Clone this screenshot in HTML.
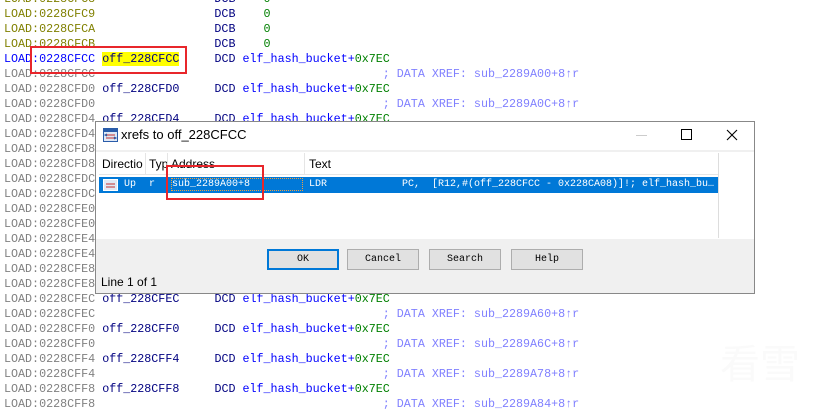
<!DOCTYPE html>
<html><head><meta charset="utf-8"><style>
*{margin:0;padding:0;box-sizing:border-box}
body{width:832px;height:411px;overflow:hidden;background:#fff;position:relative;font-family:"Liberation Mono",monospace;font-size:11.7px}
.l{position:absolute;left:4px;height:15px;line-height:15px;white-space:pre}
.g{color:#808080}.o{color:#808000}.b{color:#0000ff}.n{color:#000080}.gr{color:#008000}.c{color:#8080ff}
.hl{background:#ffff00}
.red{position:absolute;border:2px solid #e8262b}
.dlg{position:absolute;left:95px;top:121px;width:660px;height:173px;background:#f0f0f0;border:1px solid #888;font-family:"Liberation Sans",sans-serif}
.tb{height:28px;background:#fff;position:relative;font-size:13px}
.wh{position:absolute;left:0;top:30px;width:658px;height:87px;background:#fff}
.list{position:absolute;left:3px;top:31px;width:620px;height:85px;background:#fff;border-right:1px solid #ddd}
.hdr{height:22px;border-bottom:1px solid #e5e5e5;font-size:12px;position:relative}
.hdr span{position:absolute;top:4px}
.sep{position:absolute;top:0;width:1px;height:22px;background:#e5e5e5}
.row{position:absolute;top:24px;left:0;width:619px;height:16px;background:#0078d7;color:#fff;font-family:"Liberation Mono",monospace;font-size:10px}
.row span{position:absolute;top:2px;white-space:pre}
.btn{position:absolute;top:127px;height:21px;width:72px;border:1px solid #adadad;background:#e1e1e1;font-family:"Liberation Mono",monospace;font-size:10px;text-align:center;line-height:19px}
</style></head><body>
<div class="l" style="top:-8px"><span class="o">LOAD:0228CFC8</span>                 <span class="n">DCB    </span><span class="gr">0</span></div>
<div class="l" style="top:7px"><span class="o">LOAD:0228CFC9</span>                 <span class="n">DCB    </span><span class="gr">0</span></div>
<div class="l" style="top:22px"><span class="o">LOAD:0228CFCA</span>                 <span class="n">DCB    </span><span class="gr">0</span></div>
<div class="l" style="top:37px"><span class="o">LOAD:0228CFCB</span>                 <span class="n">DCB    </span><span class="gr">0</span></div>
<div class="l" style="top:52px"><span class="b">LOAD:0228CFCC</span> <span class="n hl">off_228CFCC</span>     <span class="n">DCD </span><span class="b">elf_hash_bucket+</span><span class="gr">0x7EC</span></div>
<div class="l" style="top:67px"><span class="g">LOAD:0228CFCC</span>                                         <span class="c">; DATA XREF: sub_2289A00+8↑r</span></div>
<div class="l" style="top:82px"><span class="g">LOAD:0228CFD0</span> <span class="n">off_228CFD0</span>     <span class="n">DCD </span><span class="b">elf_hash_bucket+</span><span class="gr">0x7EC</span></div>
<div class="l" style="top:97px"><span class="g">LOAD:0228CFD0</span>                                         <span class="c">; DATA XREF: sub_2289A0C+8↑r</span></div>
<div class="l" style="top:112px"><span class="g">LOAD:0228CFD4</span> <span class="n">off_228CFD4</span>     <span class="n">DCD </span><span class="b">elf_hash_bucket+</span><span class="gr">0x7EC</span></div>
<div class="l g" style="top:127px">LOAD:0228CFD4</div>
<div class="l g" style="top:142px">LOAD:0228CFD8</div>
<div class="l g" style="top:157px">LOAD:0228CFD8</div>
<div class="l g" style="top:172px">LOAD:0228CFDC</div>
<div class="l g" style="top:187px">LOAD:0228CFDC</div>
<div class="l g" style="top:202px">LOAD:0228CFE0</div>
<div class="l g" style="top:217px">LOAD:0228CFE0</div>
<div class="l g" style="top:232px">LOAD:0228CFE4</div>
<div class="l g" style="top:247px">LOAD:0228CFE4</div>
<div class="l g" style="top:262px">LOAD:0228CFE8</div>
<div class="l g" style="top:277px">LOAD:0228CFE8</div>
<div class="l" style="top:292px"><span class="g">LOAD:0228CFEC</span> <span class="n">off_228CFEC</span>     <span class="n">DCD </span><span class="b">elf_hash_bucket+</span><span class="gr">0x7EC</span></div>
<div class="l" style="top:307px"><span class="g">LOAD:0228CFEC</span>                                         <span class="c">; DATA XREF: sub_2289A60+8↑r</span></div>
<div class="l" style="top:322px"><span class="g">LOAD:0228CFF0</span> <span class="n">off_228CFF0</span>     <span class="n">DCD </span><span class="b">elf_hash_bucket+</span><span class="gr">0x7EC</span></div>
<div class="l" style="top:337px"><span class="g">LOAD:0228CFF0</span>                                         <span class="c">; DATA XREF: sub_2289A6C+8↑r</span></div>
<div class="l" style="top:352px"><span class="g">LOAD:0228CFF4</span> <span class="n">off_228CFF4</span>     <span class="n">DCD </span><span class="b">elf_hash_bucket+</span><span class="gr">0x7EC</span></div>
<div class="l" style="top:367px"><span class="g">LOAD:0228CFF4</span>                                         <span class="c">; DATA XREF: sub_2289A78+8↑r</span></div>
<div class="l" style="top:382px"><span class="g">LOAD:0228CFF8</span> <span class="n">off_228CFF8</span>     <span class="n">DCD </span><span class="b">elf_hash_bucket+</span><span class="gr">0x7EC</span></div>
<div class="l" style="top:397px"><span class="g">LOAD:0228CFF8</span>                                         <span class="c">; DATA XREF: sub_2289A84+8↑r</span></div>

<div class="red" style="left:30px;top:46px;width:157px;height:28px"></div>

<div class="dlg">
 <div class="tb">
  <svg style="position:absolute;left:7px;top:6px" width="15" height="14"><rect x="0.5" y="0.5" width="14" height="13" fill="#dfe8f5" stroke="#2a5caa"/><rect x="1" y="1" width="13" height="3" fill="#2a5caa"/><path d="M3 7h9M3 10h9" stroke="#c03030"/><path d="M4 6l-2 1 2 1M11 9l2 1-2 1" stroke="#2a5caa" fill="none"/></svg>
  <span style="position:absolute;left:25px;top:5px">xrefs to off_228CFCC</span>
  <span style="position:absolute;left:540px;top:13px;width:11px;height:1px;background:#ccc"></span>
  <span style="position:absolute;left:585px;top:7px;width:11px;height:11px;border:1px solid #000"></span>
  <svg style="position:absolute;left:630px;top:7px" width="12" height="12"><path d="M1 1L11 11M11 1L1 11" stroke="#000" stroke-width="1.1"/></svg>
 </div>
 <div class="wh"></div>
 <div class="list">
  <div class="hdr">
   <span style="left:3px">Directio</span><div class="sep" style="left:46px"></div>
   <span style="left:50px">Typ</span><div class="sep" style="left:68px"></div>
   <span style="left:72px">Address</span><div class="sep" style="left:205px"></div>
   <span style="left:210px">Text</span>
  </div>
  <div class="row">
   <svg style="position:absolute;left:4px;top:2px" width="15" height="12"><rect x="0.5" y="0.5" width="14" height="11" fill="#dfe8f5" stroke="#fff"/><path d="M3 5h9M3 8h9" stroke="#c03030"/></svg>
   <span style="left:25px">Up</span><span style="left:50px">r</span>
   <span style="left:73px;outline:1px dotted #f0a040;width:130px">sub_2289A00+8</span>
   <span style="left:210px">LDR</span>
   <span style="left:303px">PC,  [R12,#(off_228CFCC - 0x228CA08)]!; elf_hash_bu…</span>
  </div>
 </div>
 <div class="btn" style="left:171px;border:2px solid #0078d7;line-height:17px">OK</div>
 <div class="btn" style="left:251px">Cancel</div>
 <div class="btn" style="left:333px">Search</div>
 <div class="btn" style="left:415px">Help</div>
 <div style="position:absolute;left:5px;top:153px;font-size:12px">Line 1 of 1</div>
</div>
<div class="red" style="left:166px;top:165px;width:98px;height:35px"></div>
<div style="position:absolute;left:720px;top:332px;font-family:'Noto Sans CJK SC',sans-serif;font-size:40px;color:#fafafa">看雪</div>
</body></html>
